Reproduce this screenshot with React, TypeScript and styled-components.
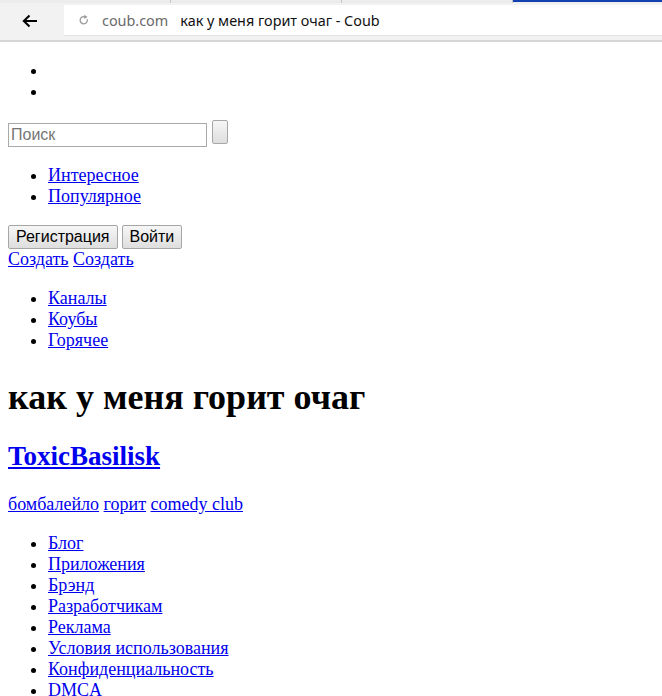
import styled, { createGlobalStyle } from "styled-components";

const GlobalStyle = createGlobalStyle`
  html, body {
    margin: 0;
    padding: 0;
    background: #ffffff;
  }
`;

const topLinks = ["Интересное", "Популярное"];
const sectionLinks = ["Каналы", "Коубы", "Горячее"];
const tags = ["бомбалейло", "горит", "comedy club"];
const footerLinks = [
  "Блог",
  "Приложения",
  "Брэнд",
  "Разработчикам",
  "Реклама",
  "Условия использования",
  "Конфиденциальность",
  "DMCA",
];

const BackArrow = () => (
  <svg width="16" height="14" viewBox="0 0 16 14">
    <path d="M15 7H2.5M7.5 1.5L1.8 7l5.7 5.5" fill="none" stroke="#000" strokeWidth="2" />
  </svg>
);

const ReloadIcon = () => (
  <svg width="10" height="12" viewBox="0 0 10 12">
    <path d="M8.2 5.2A3.6 3.6 0 1 1 6.4 3" fill="none" stroke="#9a9a9a" strokeWidth="1.3" />
    <path d="M5.2 0.8L8.6 2.9 5.4 4.9z" fill="#9a9a9a" />
  </svg>
);

const App = () => {
  return (
    <>
      <GlobalStyle />
      <Header>
        <TabStrip>
          <Tab />
          <Tab />
          <Tab />
          <ActiveTab />
        </TabStrip>
        <Toolbar>
          <NavButton>
            <BackArrow />
          </NavButton>
          <Omnibox>
            <ReloadSlot>
              <ReloadIcon />
            </ReloadSlot>
            <Host>coub.com</Host>
            <PageTitle>как у меня горит очаг - Coub</PageTitle>
          </Omnibox>
        </Toolbar>
      </Header>

      <Page>
        <List>
          <li />
          <li />
        </List>

        <SearchForm>
          <SearchInput placeholder="Поиск" />
          <EmptyButton />
        </SearchForm>

        <List>
          {topLinks.map((t) => (
            <li key={t}>
              <Link href="#">{t}</Link>
            </li>
          ))}
        </List>

        <ButtonRow>
          <PlainButton>Регистрация</PlainButton>
          <PlainButton>Войти</PlainButton>
        </ButtonRow>
        <Line>
          <Link href="#">Создать</Link> <Link href="#">Создать</Link>
        </Line>

        <List>
          {sectionLinks.map((t) => (
            <li key={t}>
              <Link href="#">{t}</Link>
            </li>
          ))}
        </List>

        <Title>как у меня горит очаг</Title>
        <Author>
          <Link href="#">ToxicBasilisk</Link>
        </Author>

        <Paragraph>
          {tags.map((t, i) => (
            <span key={t}>
              {i > 0 && " "}
              <Link href="#">{t}</Link>
            </span>
          ))}
        </Paragraph>

        <List>
          {footerLinks.map((t) => (
            <li key={t}>
              <Link href="#">{t}</Link>
            </li>
          ))}
        </List>
      </Page>
    </>
  );
};

export default App;

const Header = styled.div`
  background-color: #f2f2f2;
  border-bottom: 2px solid #d6d6d6;
`;

const TabStrip = styled.div`
  display: flex;
  height: 3px;
  background-color: #ececec;
`;

const Tab = styled.div`
  width: 170px;
  border-right: 1px solid #c8c8c8;
`;

const ActiveTab = styled.div`
  flex: 1;
  border-top: 2px solid #1140b0;
`;

const Toolbar = styled.div`
  display: flex;
  height: 37px;
  padding-top: 2px;
  box-sizing: border-box;
`;

const NavButton = styled.div`
  width: 64px;
  height: 31px;
  display: flex;
  align-items: center;
  justify-content: center;
  padding-right: 4px;
  box-sizing: border-box;
`;

const Omnibox = styled.div`
  flex: 1;
  height: 31px;
  display: flex;
  align-items: center;
  background-color: #ffffff;
  border-bottom: 1px solid #e2e2e2;
  box-sizing: border-box;
  font-family: "Noto Sans", "Open Sans", sans-serif;
  font-size: 14.4px;
`;

const ReloadSlot = styled.div`
  width: 38px;
  display: flex;
  justify-content: center;
  padding-left: 2px;
  box-sizing: border-box;
`;

const Host = styled.span`
  color: #6a6a6a;
  margin-right: 12px;
`;

const PageTitle = styled.span`
  color: #111111;
`;

const Page = styled.div`
  padding: 0 8px 8px;
  font-family: "Liberation Serif", "Times New Roman", serif;
  font-size: 18px;
  line-height: 21px;
  color: #000000;
`;

const List = styled.ul`
  margin: 18px 0;
  padding-left: 40px;
  list-style: disc;

  li {
    height: 21px;
  }
`;

const Link = styled.a`
  color: #0000ee;
  text-decoration: underline;
`;

const SearchForm = styled.form`
  display: flex;
  align-items: flex-start;
  gap: 5px;
  height: 27px;
  margin: 0;
`;

const SearchInput = styled.input`
  width: 199px;
  height: 24px;
  margin-top: 3px;
  padding: 1px 2px;
  box-sizing: border-box;
  border: 1px solid #a9a9a9;
  font-family: "Liberation Sans", Arial, sans-serif;
  font-size: 16px;
  color: #000;
  outline: none;

  &::placeholder {
    color: #757575;
  }
`;

const ButtonBase = styled.button`
  height: 24px;
  box-sizing: border-box;
  border: 1px solid #a6a6a6;
  border-radius: 2px;
  background: linear-gradient(#f6f6f6, #dedede);
  font-family: "Liberation Sans", Arial, sans-serif;
  font-size: 16px;
  color: #000;
  padding: 0 7px;
  margin: 0;
`;

const EmptyButton = styled(ButtonBase)`
  width: 16px;
  padding: 0;
`;

const PlainButton = styled(ButtonBase)``;

const ButtonRow = styled.div`
  display: flex;
  gap: 4px;
  height: 24px;
`;

const Line = styled.div`
  height: 21px;
`;

const Title = styled.h1`
  margin: 26px 0 23px;
  font-size: 36px;
  line-height: 41px;
  font-weight: bold;
`;

const Author = styled.h2`
  margin: 22px 0;
  font-size: 27px;
  line-height: 31px;
  font-weight: bold;
`;

const Paragraph = styled.p`
  margin: 18px 0;
`;
